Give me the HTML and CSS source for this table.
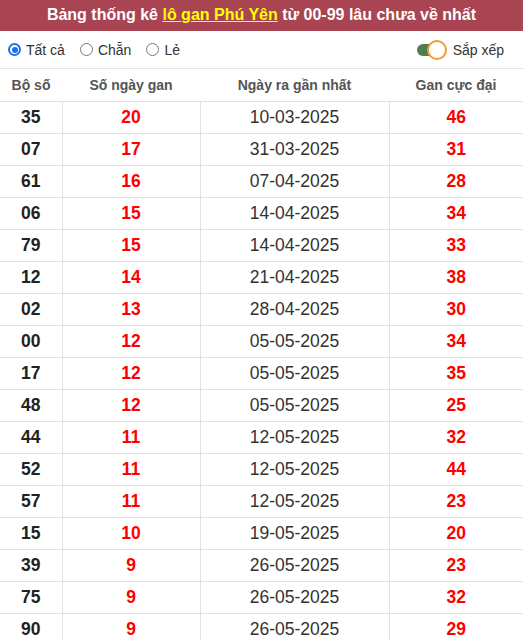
FILE: index.html
```html
<!DOCTYPE html>
<html lang="vi">
<head>
<meta charset="utf-8">
<link rel="stylesheet" href="styles.css">
</head>
<body>
<div class="title">Bảng thống kê <a href="#" class="hl">lô gan Phú Yên</a> từ 00-99 lâu chưa về nhất</div>
<div class="controls">
  <div class="radios">
    <label class="opt"><span class="radio checked"></span>Tất cả</label>
    <label class="opt"><span class="radio"></span>Chẵn</label>
    <label class="opt"><span class="radio"></span>Lẻ</label>
  </div>
  <label class="sort"><span class="toggle"><span class="knob"></span></span>Sắp xếp</label>
</div>
<table class="tbl">
  <colgroup><col class="c1"><col class="c2"><col class="c3"><col class="c4"></colgroup>
  <thead>
    <tr><th>Bộ số</th><th>Số ngày gan</th><th>Ngày ra gần nhất</th><th>Gan cực đại</th></tr>
  </thead>
  <tbody>
    <tr><td class="num">35</td><td class="red">20</td><td class="date">10-03-2025</td><td class="red">46</td></tr>
    <tr><td class="num">07</td><td class="red">17</td><td class="date">31-03-2025</td><td class="red">31</td></tr>
    <tr><td class="num">61</td><td class="red">16</td><td class="date">07-04-2025</td><td class="red">28</td></tr>
    <tr><td class="num">06</td><td class="red">15</td><td class="date">14-04-2025</td><td class="red">34</td></tr>
    <tr><td class="num">79</td><td class="red">15</td><td class="date">14-04-2025</td><td class="red">33</td></tr>
    <tr><td class="num">12</td><td class="red">14</td><td class="date">21-04-2025</td><td class="red">38</td></tr>
    <tr><td class="num">02</td><td class="red">13</td><td class="date">28-04-2025</td><td class="red">30</td></tr>
    <tr><td class="num">00</td><td class="red">12</td><td class="date">05-05-2025</td><td class="red">34</td></tr>
    <tr><td class="num">17</td><td class="red">12</td><td class="date">05-05-2025</td><td class="red">35</td></tr>
    <tr><td class="num">48</td><td class="red">12</td><td class="date">05-05-2025</td><td class="red">25</td></tr>
    <tr><td class="num">44</td><td class="red">11</td><td class="date">12-05-2025</td><td class="red">32</td></tr>
    <tr><td class="num">52</td><td class="red">11</td><td class="date">12-05-2025</td><td class="red">44</td></tr>
    <tr><td class="num">57</td><td class="red">11</td><td class="date">12-05-2025</td><td class="red">23</td></tr>
    <tr><td class="num">15</td><td class="red">10</td><td class="date">19-05-2025</td><td class="red">20</td></tr>
    <tr><td class="num">39</td><td class="red">9</td><td class="date">26-05-2025</td><td class="red">23</td></tr>
    <tr><td class="num">75</td><td class="red">9</td><td class="date">26-05-2025</td><td class="red">32</td></tr>
    <tr><td class="num">90</td><td class="red">9</td><td class="date">26-05-2025</td><td class="red">29</td></tr>
  </tbody>
</table>
</body>
</html>
```
FILE: styles.css
```css
html, body { margin: 0; padding: 0; background: #fff; }
body { font-family: "Liberation Sans", Arial, sans-serif; color: #222; }
.title {
  background: #a94453;
  color: #fff;
  font-weight: bold;
  font-size: 16px;
  height: 31px;
  line-height: 30px;
  text-align: center;
}
.hl { color: #ffff00; text-decoration: underline; }
.controls {
  display: flex;
  align-items: center;
  justify-content: space-between;
  height: 37px;
  padding: 0 19px 0 8px;
  border-bottom: 1px solid #e6e6e6;
}
.radios { display: flex; align-items: center; gap: 15px; }
.opt { display: flex; align-items: center; font-size: 14px; color: #333; gap: 5px; }
.radio {
  width: 13px; height: 13px; border-radius: 50%;
  border: 1px solid #767676; box-sizing: border-box;
  display: inline-block; position: relative;
}
.radio.checked { border: 2px solid #1a73e8; }
.radio.checked::after {
  content: ""; position: absolute; left: 1.5px; top: 1.5px;
  width: 6px; height: 6px; border-radius: 50%; background: #1a73e8;
}
.sort { display: flex; align-items: center; font-size: 14px; color: #333; }
.toggle {
  width: 22px; height: 12px; border-radius: 6px; background: #4f7d50;
  position: relative; display: inline-block; margin-right: 14px;
}
.knob {
  position: absolute; left: 10px; top: -4px;
  width: 20px; height: 20px; box-sizing: border-box;
  border-radius: 50%; background: #fff; border: 2px solid #f59a30;
}
.tbl { width: 100%; border-collapse: collapse; table-layout: fixed; }
.c1 { width: 62px; } .c2 { width: 138px; } .c3 { width: 189px; } .c4 { width: auto; }
.tbl th {
  height: 32px; font-size: 14px; font-weight: bold; color: #555;
  text-align: center; padding: 0; border-bottom: 1px solid #e2e2e2;
}
.tbl td {
  height: 31px; padding: 0; text-align: center; font-size: 17.5px;
  border-bottom: 1px solid #e2e2e2; border-left: 1px solid #e2e2e2;
}
.tbl td:first-child { border-left: none; }
.num { font-weight: bold; color: #222; }
.red { font-weight: bold; color: #f00; }
.date { color: #333; }
```
